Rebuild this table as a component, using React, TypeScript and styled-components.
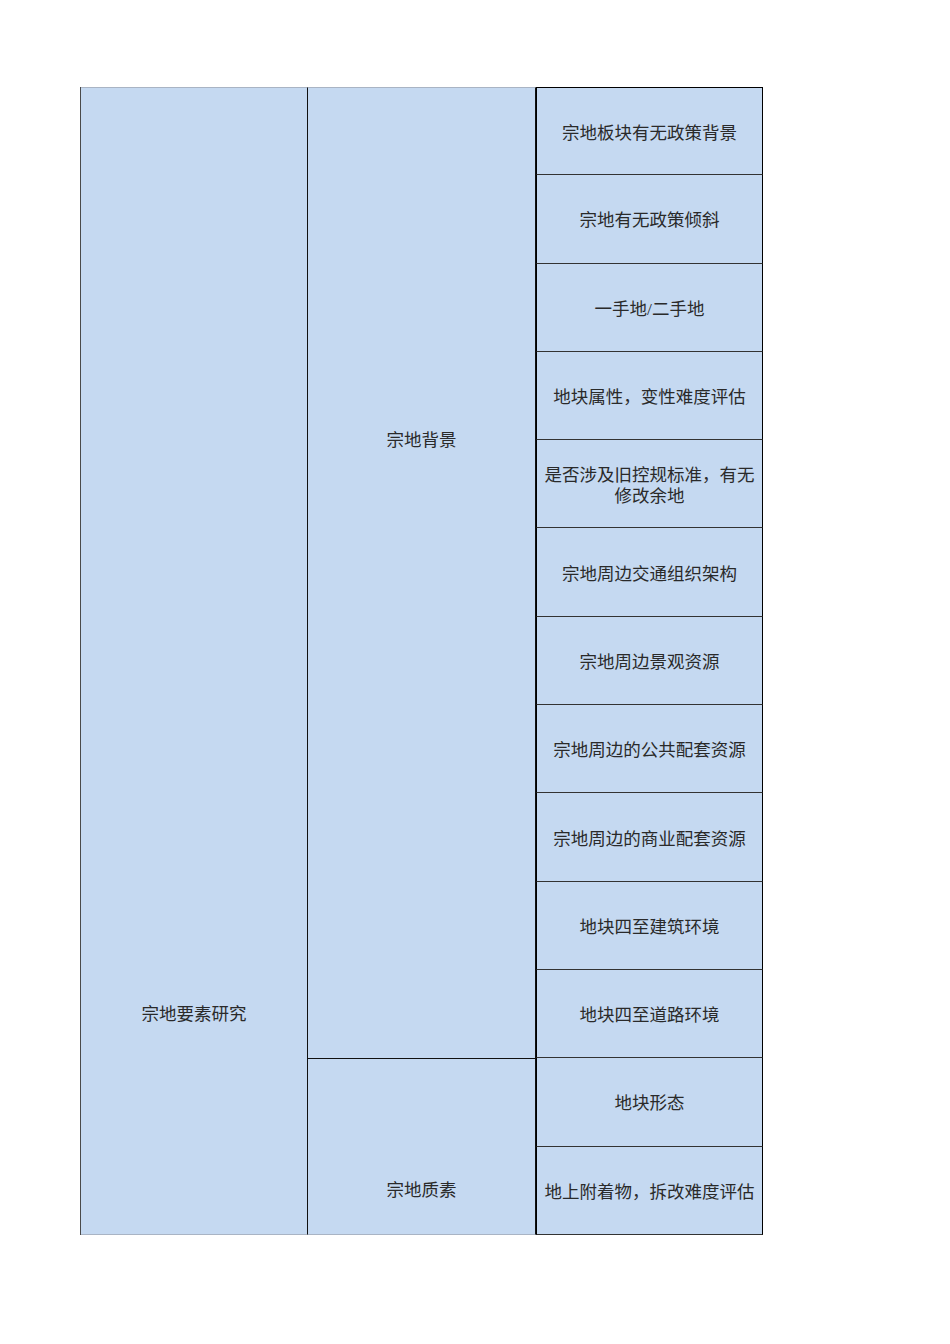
import React from 'react';
import styled, { createGlobalStyle } from 'styled-components';

/* -------------------------- styles -------------------------- */
const GlobalStyle = createGlobalStyle`
  html, body { margin: 0; padding: 0; background: #fff; }
  body {
    font-family: 'Liberation Serif', 'Noto Sans CJK SC', serif;
    color: #2a2a2a;
  }
`;

const Page = styled.div`
  width: 950px; height: 1344px; box-sizing: border-box;
  padding: 87px 0 0 80px;
`;

const Sheet = styled.div`
  display: grid;
  grid-template-columns: 227px 228px 227px;
  grid-template-rows: repeat(13, 88.3px);
  width: 682px;
  background: #c5d9f1;
  border-left: 1px solid #4a4a4a;
`;

const GroupCell = styled.div<{ $padTop: number; $rows: number; $col: number; $row: number }>`
  grid-column: ${p => p.$col};
  grid-row: ${p => p.$row} / span ${p => p.$rows};
  box-sizing: border-box;
  display: flex; justify-content: center; align-items: flex-start;
  padding-top: ${p => p.$padTop}px;
  border-right: 1px solid #111;
  border-top: 1px solid ${p => (p.$row === 1 ? '#a9b4c4' : '#111')};
  border-bottom: 1px solid #a9b4c4;
  margin-bottom: ${p => (p.$row + p.$rows > 13 ? '0' : '-1px')};
  font-size: 17.5px; line-height: 22px;
`;

const ItemCell = styled.div<{ $first?: boolean }>`
  grid-column: 3;
  box-sizing: border-box;
  display: flex; align-items: center; justify-content: center;
  text-align: center;
  padding: 4px 5px 0;
  border-left: 1px solid #000;
  border-right: 1.5px solid #000;
  border-top: ${p => (p.$first ? '1.5px solid #000' : 'none')};
  border-bottom: 1.5px solid #333;
  font-size: 17.5px; line-height: 21px;
`;

/* ------------------------- data ------------------------ */
const items = [
  '宗地板块有无政策背景',
  '宗地有无政策倾斜',
  '一手地/二手地',
  '地块属性，变性难度评估',
  '是否涉及旧控规标准，有无修改余地',
  '宗地周边交通组织架构',
  '宗地周边景观资源',
  '宗地周边的公共配套资源',
  '宗地周边的商业配套资源',
  '地块四至建筑环境',
  '地块四至道路环境',
  '地块形态',
  '地上附着物，拆改难度评估',
];

/* ------------------------- component ------------------------ */
const App: React.FC = () => (
  <>
    <GlobalStyle />
    <Page>
      <Sheet>
        <GroupCell $col={1} $row={1} $rows={13} $padTop={915}>宗地要素研究</GroupCell>
        <GroupCell $col={2} $row={1} $rows={11} $padTop={341}>宗地背景</GroupCell>
        <GroupCell $col={2} $row={12} $rows={2} $padTop={120}>宗地质素</GroupCell>
        {items.map((t, i) => (
          <ItemCell key={i} $first={i === 0} style={{ gridRow: i + 1 }}>
            {t}
          </ItemCell>
        ))}
      </Sheet>
    </Page>
  </>
);

export default App;
